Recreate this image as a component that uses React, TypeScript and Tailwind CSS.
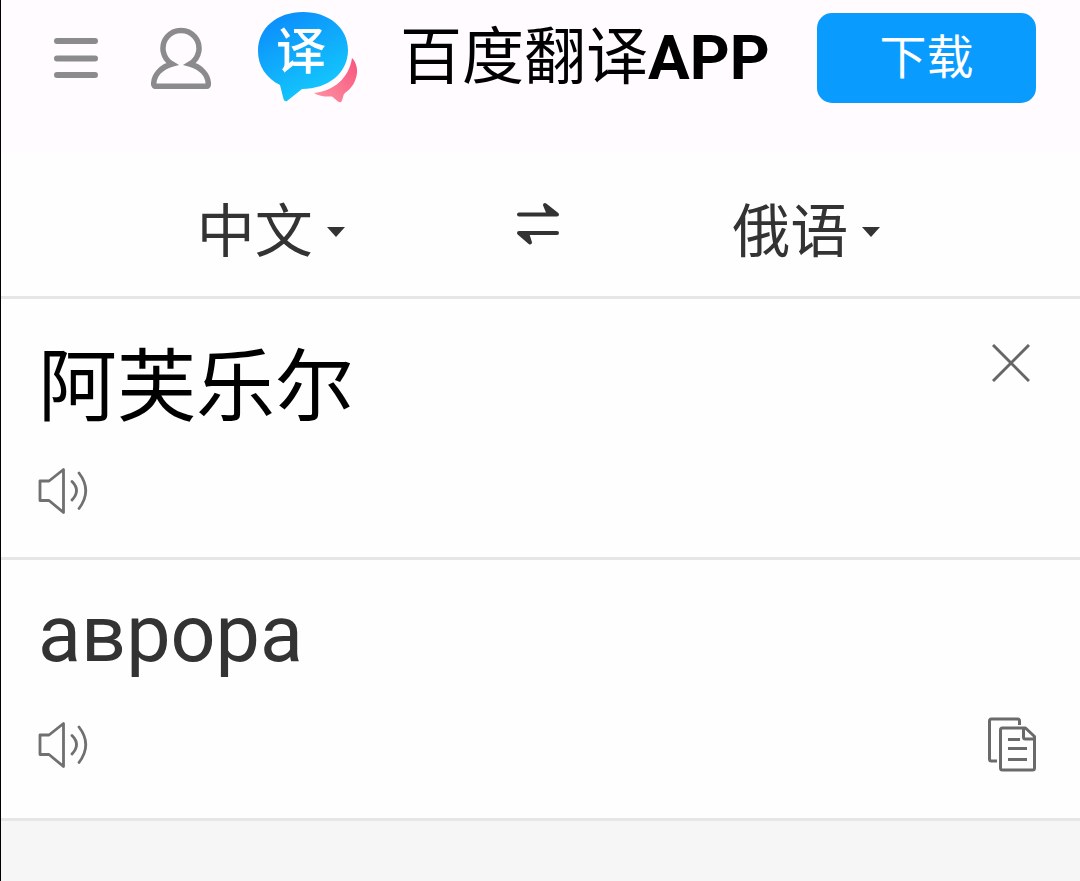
import { useState } from "react";

const languages = ["中文", "俄语", "英语", "日语", "韩语", "法语"];

function MenuIcon() {
  return (
    <svg width="46" height="42" viewBox="0 0 46 42" fill="none" stroke="#8b8b8d" strokeWidth="6" strokeLinecap="round">
      <path d="M4 4H42M4 21.5H42M4 38H42" />
    </svg>
  );
}

function UserIcon() {
  return (
    <svg width="60" height="62" viewBox="0 0 60 62" fill="none" stroke="#8b8b8d" strokeWidth="5.5">
      <path d="M21 37A18 18 0 1 1 39 37C50 40 57.3 48 57.3 57Q57.3 59.3 55 59.3H5Q2.7 59.3 2.7 57C2.7 48 10 40 21 37Z" />
    </svg>
  );
}

function Logo() {
  return (
    <svg width="100" height="91" viewBox="0 0 100 91">
      <defs>
        <linearGradient id="bubble" x1="0.2" y1="0" x2="0.7" y2="1">
          <stop offset="0" stopColor="#0b8cfb" />
          <stop offset="1" stopColor="#15cdfc" />
        </linearGradient>
        <linearGradient id="tail" x1="1" y1="0" x2="0" y2="1">
          <stop offset="0" stopColor="#f7547c" />
          <stop offset="1" stopColor="#fd94a4" />
        </linearGradient>
      </defs>
      <path d="M94 46C98 50 99.5 56 99 61C98 70 93 77 87 81C85 82.5 85 87 83.5 89.500Q82 91 80 89.5L74 84.5C67 85 61 84 56 81C76 79 91 66 94 46Z" fill="url(#tail)" />
      <path d="M45 0C71 0 90 16 90 38C90 61 70 77 44 77L29 89Q26.5 90 25.5 87L22 73C8 66 0 54 0 39C0 16 19 0 45 0Z" fill="url(#bubble)" />
      <text x="18" y="57" fill="#fff" fontSize="50" fontWeight="500" className="font-['Noto_Sans_CJK_SC',sans-serif]">
        译
      </text>
    </svg>
  );
}

function SwapIcon() {
  return (
    <svg width="44" height="44" viewBox="0 0 44 44" fill="#333" stroke="#333" strokeWidth="4" strokeLinecap="round" strokeLinejoin="round">
      <path d="M2 12.5H40L28 3L32 12.5ZM40 31H2L13 40.5L10 31Z" />
    </svg>
  );
}

function CloseIcon() {
  return (
    <svg width="38" height="38" viewBox="0 0 38 38" fill="none" stroke="#666" strokeWidth="3">
      <path d="M1 1L37 37M37 1L1 37" />
    </svg>
  );
}

function SpeakerIcon() {
  return (
    <svg width="50" height="46" viewBox="0 0 50 46" fill="none" stroke="#707070" strokeWidth="2.8" strokeLinecap="round" strokeLinejoin="round">
      <path d="M2 13H11L25.5 1.5V44.5L11 32.5H2Z" />
      <path d="M34 13.5Q43 22.5 34 32M41 5Q54.5 22.5 41 40.5" />
    </svg>
  );
}

function CopyIcon() {
  return (
    <svg width="48" height="55" viewBox="0 0 48 55" fill="none" stroke="#6a6a6a" strokeWidth="3" strokeLinejoin="round">
      <path d="M31.5 8V4Q31.5 2 29.5 2H3.5Q1.5 2 1.5 4V42Q1.5 44 3.5 44H9" />
      <path d="M37.5 11H14.5Q12.5 11 12.5 13V51Q12.5 53 14.5 53H44.5Q46.5 53 46.5 51V19.5ZM35.5 11V20Q35.5 22 37.5 22H46.5" />
      <path d="M20 22.5H32M20 31.5H39M20 42.5H39" />
    </svg>
  );
}

function LanguageSelect(props: { label: string; value: string; onChange: (value: string) => void }) {
  return (
    <label className="flex flex-1 items-center justify-center gap-3.5 pt-4">
      <select
        aria-label={props.label}
        value={props.value}
        onChange={(e) => props.onChange(e.target.value)}
        className="appearance-none field-sizing-content text-[58px] leading-[80px] text-[#333]"
      >
        {languages.map((language) => (
          <option key={language}>{language}</option>
        ))}
      </select>
      <svg width="18" height="10" viewBox="0 0 18 10" fill="#333">
        <path d="M0 0H18L9 10Z" />
      </svg>
    </label>
  );
}

export default function App() {
  const [from, setFrom] = useState("中文");
  const [to, setTo] = useState("俄语");
  const [text, setText] = useState("阿芙乐尔");

  const handleSwap = () => {
    setFrom(to);
    setTo(from);
  };

  return (
    <div className="flex min-h-screen flex-col border-l border-black bg-[#fefefe] font-[Roboto,'Noto_Sans_CJK_SC',sans-serif]">
      <header className="flex items-center bg-[#fffbff] pt-3 pr-11 pb-[49px] pl-[52px]">
        <button type="button" aria-label="菜单">
          <MenuIcon />
        </button>
        <button type="button" aria-label="用户" className="ml-[52px]">
          <UserIcon />
        </button>
        <a href="#" className="ml-[47px] flex items-center gap-[42px] text-[62px] leading-[90px] whitespace-nowrap text-black">
          <Logo />
          <span>
            百度翻译<b>APP</b>
          </span>
        </a>
        <button type="button" className="ml-auto h-[90px] w-[219px] rounded-[15px] bg-[#0a9bff] text-[47px] leading-[90px] text-white">
          下载
        </button>
      </header>

      <main>
        <div className="flex h-[147px] items-center border-b-3 border-[#e6e6e6] pr-7 pl-6">
          <LanguageSelect label="源语言" value={from} onChange={setFrom} />
          <button type="button" aria-label="交换语言" onClick={handleSwap}>
            <SwapIcon />
          </button>
          <LanguageSelect label="目标语言" value={to} onChange={setTo} />
        </div>

        <section className="border-b-3 border-[#e6e6e6] pt-[34px] pr-[50px] pb-[43px] pl-[37px]">
          <div className="flex items-start justify-between">
            <textarea
              aria-label="输入文字"
              rows={1}
              value={text}
              onChange={(e) => setText(e.target.value)}
              className="block h-[110px] min-w-0 flex-1 resize-none overflow-hidden text-[79px] leading-[110px] text-black outline-none"
            />
            <button type="button" aria-label="清空" className="mt-[11px]" onClick={() => setText("")}>
              <CloseIcon />
            </button>
          </div>
          <button type="button" aria-label="朗读原文" className="mt-[25px] block">
            <SpeakerIcon />
          </button>
        </section>

        <section className="border-b-3 border-[#e6e6e6] pt-[19px] pr-11 pb-[46px] pl-[37px]">
          <p className="text-[79px] leading-[110px] text-[#333]">аврора</p>
          <div className="mt-[28px] flex items-center justify-between">
            <button type="button" aria-label="朗读译文">
              <SpeakerIcon />
            </button>
            <button type="button" aria-label="复制">
              <CopyIcon />
            </button>
          </div>
        </section>
      </main>

      <div className="flex-1 bg-[#f6f6f6]" />
    </div>
  );
}
